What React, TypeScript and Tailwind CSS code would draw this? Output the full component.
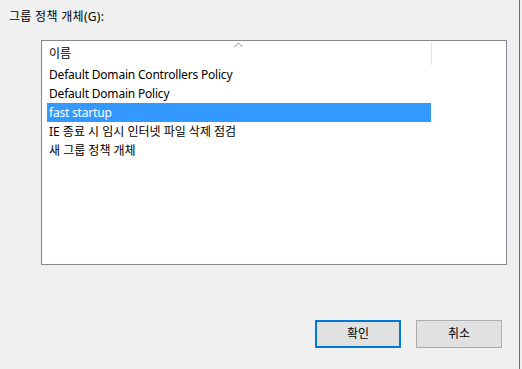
const rows = [
  { label: "Default Domain Controllers Policy", latin: true },
  { label: "Default Domain Policy", latin: true },
  { label: "fast startup", latin: true },
  { label: "IE 종료 시 임시 인터넷 파일 삭제 점검", latin: false },
  { label: "새 그룹 정책 개체", latin: false },
];

export default function App() {
  const selected = 2;
  return (
    <div
      className="flex w-[522px] h-[369px] bg-[#f0f0f0] text-[12px] text-black"
      style={{ fontFamily: '"Noto Sans", "Noto Sans CJK KR", sans-serif' }}
    >
      <div className="flex flex-col w-[519px]">
        <div className="h-[16px] mt-[9px] ml-[9px] leading-[16px] tracking-[0.3px]">그룹 정책 개체(G):</div>

        <div className="ml-[41px] mt-[15px] w-[466px] h-[225px] border border-[#828790] bg-white flex flex-col">
          <div className="relative flex h-[24px]">
            <div className="w-[389px] pl-[7px] leading-[24px] pt-[1px]">이름</div>
            <div className="w-px h-[23px] mt-[1px] bg-[#e5e5e5]" />
            <svg className="absolute left-[192px] top-[1px]" width="9" height="6" viewBox="0 0 9 6">
              <path d="M0.5 5 L4.5 1 L8.5 5" fill="none" stroke="#8a8a8a" strokeWidth="1" />
            </svg>
          </div>
          <div className="flex flex-col ml-[5px] w-[384px]">
            {rows.map((r, i) => (
              <div
                key={r.label}
                className={
                  "h-[19px] leading-[19px] pl-[2px] " +
                  (r.latin ? "tracking-[-0.2px] " : "") +
                  (i === selected ? "bg-[#3399ff] text-white" : "")
                }
              >
                {r.label}
              </div>
            ))}
          </div>
        </div>

        <div className="flex ml-[315px] mt-[55px] gap-[15px]">
          <button className="w-[86px] h-[28px] border-2 border-[#0078d7] bg-[#e1e1e1] leading-[24px]">
            확인
          </button>
          <button className="w-[86px] h-[28px] border border-[#adadad] bg-[#e1e1e1] leading-[26px]">
            취소
          </button>
        </div>
      </div>
      <div className="w-px bg-[#2b79d0]" />
    </div>
  );
}
